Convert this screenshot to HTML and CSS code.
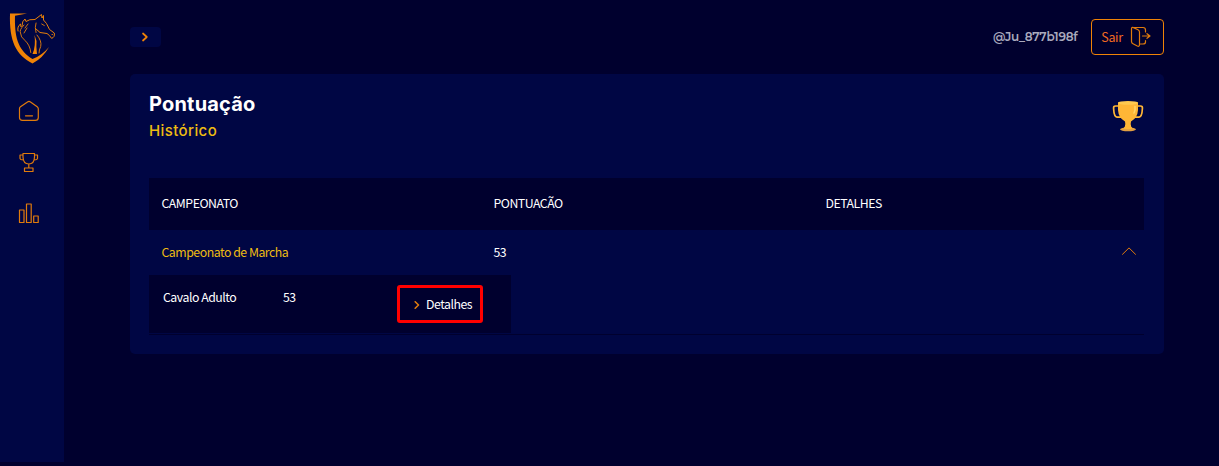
FILE: index.html
```html
<!DOCTYPE html>
<html lang="pt-BR">
<head>
<meta charset="utf-8">
<title>Pontuação</title>
<link rel="stylesheet" href="styles.css">
</head>
<body>
<div class="app">
  <aside class="sidebar">
    <svg class="logo" width="50" height="54" viewBox="0 0 50 54" fill="none" stroke="#e88009" stroke-linecap="round" stroke-linejoin="round">
      <path d="M2 2.500H19L7 4.800C6.500 24 9 39 24.500 48Q34 44.500 41 36Q35 47 24.500 52.500C8 44 1 30 2 2.500Z" fill="#f08306" stroke="none"/>
      <path d="M10 20Q9 15.500 12.500 13Q12 17 14 15Q14 10 17 8L18 10.500Q21 8 27 8.500L33.500 3.500L34 7L35.500 4.500L35.500 9L38.500 12.500L41.500 18.500L46.300 22Q47 26.500 43.500 27.300Q41.500 24 39 22.500L32 21.500L27.500 17.500" stroke-width="1"/>
      <path d="M16 14Q11 19 12.500 22Q12.500 26 17 29.500Q22 34 22.800 41.500M28 12Q26.500 16 28 21.500M29 24Q34 30 32.700 35.500Q31 39 31 42M33.700 13L36.300 14.500M44 23.500H44.500M20 13L17 17M19 17L16 22" stroke-width=".9"/>
      <path d="M26.500 24Q28 35 24.500 43H29Q28 36 28.500 30Z" fill="#f08306" stroke="none"/>
    </svg>
    <nav class="nav">
      <svg width="22" height="22" viewBox="0 0 22 22" class="line"><path d="M1.500 8.500Q1.500 7.400 2.500 6.700L9.500 1.900Q11 .9 12.500 1.900L19.200 6.700Q20.300 7.500 20.300 8.800V17.500Q20.300 20.400 17.400 20.400H4.400Q1.500 20.400 1.500 17.500ZM7.500 15.800H14.500"/></svg>
      <svg width="22" height="22" viewBox="0 0 22 22" class="line"><path d="M5 2.500H16.500V6Q16.300 13 10.800 13Q5.200 13 5 6ZM5 4H2V7.500Q2.300 9 5.500 9M16.500 4H19.500V7.500Q19.200 9 16 9M10.800 13V17M6.500 17H15V20.500H6.500Z"/></svg>
      <svg width="22" height="22" viewBox="0 0 22 22" class="line"><path d="M1.500 8H6V20.500H1.500ZM8.500 2H13.200V20.500H8.500ZM15.700 14H20.200V20.500H15.700Z"/></svg>
    </nav>
  </aside>
  <main class="main">
    <header class="topbar">
      <button class="toggle"><svg width="8" height="10" viewBox="0 0 8 10" class="line bold"><path d="M2 1.500L5.800 5L2 8.500"/></svg></button>
      <div class="account">
        <span class="user">@Ju_877b198f</span>
        <button class="logout"><span class="logout-label">Sair</span>
          <svg width="22" height="22" viewBox="0 0 22 22" class="line"><path d="M3 1.500H13Q15.500 1.500 15.500 4V6M15.500 14.500V16Q15.500 18 13 18H10.500M1.500 3Q1.500 .8 3.500 1.600L8 3.700Q9.500 4.400 9.500 6V18.500Q9.500 21 7.300 20L3 17.800Q1.500 17 1.500 15.500ZM12.500 10H19.500M17 7.700L20 10L17 12.300"/></svg>
        </button>
      </div>
    </header>
    <section class="card">
      <div class="card-head">
        <div>
          <h1 class="title">Pontuação</h1>
          <h2 class="subtitle">Histórico</h2>
        </div>
        <svg class="cup" width="32" height="32" viewBox="0 0 32 32">
          <path d="M7 6H3.500Q1.300 6 1.600 8.500Q2 17 5 17.200H10M25 6H28.500Q30.700 6 30.400 8.500Q30 17 27 17.200H22" fill="none" stroke="#ffb636" stroke-width="1.700"/>
          <path d="M6 2.500H26V10Q25.500 18 19 21.500Q18 24 19.500 28H12.500Q14 24 13 21.500Q6.500 18 6 10Z" fill="#ffb636"/>
          <ellipse cx="16" cy="2.800" rx="10" ry="1.900" fill="#ffc84f"/>
          <ellipse cx="16" cy="29.300" rx="8" ry="2" fill="#e2a042"/>
          <path d="M12.500 27Q16 25.500 19.500 27L20.500 28.500Q16 30 11.500 28.500Z" fill="#ffb636"/>
          <path d="M23 6.500Q23.500 10 22 13" fill="none" stroke="#ffd469" stroke-width="1.600" stroke-linecap="round"/>
        </svg>
      </div>
      <div class="table">
        <div class="row row-head"><span>CAMPEONATO</span><span>PONTUACÃO</span><span>DETALHES</span></div>
        <div class="row row-main"><span class="champ">Campeonato de Marcha</span><span>53</span>
          <span class="collapse"><svg width="14" height="8" viewBox="0 0 14 8" class="line thin"><path d="M.5 7.300L7 .9L13.500 7.300"/></svg></span>
        </div>
        <div class="detail">
          <span class="category">Cavalo Adulto</span><span class="points">53</span>
          <button class="more"><svg width="6" height="8" viewBox="0 0 6 8" class="line more-arrow"><path d="M1.200 .8L4.500 4L1.200 7.200"/></svg><span>Detalhes</span></button>
        </div>
      </div>
    </section>
  </main>
</div>
</body>
</html>
```
FILE: styles.css
```css
* { box-sizing: border-box; }
body {
  margin: 0;
  background: #00002e;
  color: #fff;
  font-family: "Noto Sans CJK SC", "Noto Sans", sans-serif;
  font-size: 12.3px;
  letter-spacing: -.48px;
  line-height: 20px;
}
button { font: inherit; letter-spacing: inherit; color: inherit; padding: 0; border: 0; background: none; }
svg { display: block; flex: none; }
h1, h2 { margin: 0; }
.line { fill: none; stroke: #e07b0c; stroke-width: 1.2; stroke-linejoin: round; stroke-linecap: round; }
.bold { stroke: #f08306; stroke-width: 1.7; }
.thin { stroke-width: 1; }
.app { display: flex; height: 466px; overflow: hidden; }
.sidebar { width: 64px; height: 462px; background: #000644; padding: 11px 0 0 8px; }
.nav { display: flex; flex-direction: column; gap: 29px; padding: 35px 0 0 10px; }
.main { width: 1034px; margin-left: 66px; }
.topbar { height: 74px; padding-top: 19px; display: flex; justify-content: space-between; align-items: flex-start; }
.toggle { width: 31px; height: 20px; margin-top: 8px; border-radius: 4px; background: #000644; display: flex; align-items: center; justify-content: center; padding-right: 1px; }
.account { display: flex; align-items: center; gap: 13px; }
.user { font-family: Montserrat, Inter, sans-serif; font-weight: 600; font-size: 12px; letter-spacing: -.25px; color: #a9a9bd; width: 85px; white-space: nowrap; }
.logout { width: 73px; height: 36px; border: 1px solid #f08306; border-radius: 4px; padding-left: 9px; display: flex; align-items: center; gap: 7px; }
.logout-label { color: #f26a21; width: 22px; font-size: 12.5px; letter-spacing: -.35px; }
.card { height: 280px; padding: 18px 20px 19px 19px; border-radius: 5px; background: #000644; }
.card-head { height: 86px; display: flex; justify-content: space-between; }
.title { font: 700 20px/24px Inter, sans-serif; letter-spacing: .2px; }
.subtitle { font: 500 15px/20px Inter, sans-serif; letter-spacing: .4px; color: #eebc12; margin-top: 5px; }
.cup { margin-top: 8px; }
.table { height: 157px; border-bottom: 1px solid #00002e; }
.row { display: grid; grid-template-columns: 332px 332px 1fr; align-items: center; padding: 0 0 2px 12.5px; }
.row-head { height: 52px; background: #00002e; }
.row-main { height: 45px; }
.champ { color: #eebc12; }
.collapse { display: flex; justify-content: flex-end; padding: 0 8px 2px 0; }
.detail { width: 362px; height: 58px; background: #00002e; display: flex; align-items: flex-start; padding: 10px 0 0 14px; }
.category { width: 120px; padding-top: 2px; }
.points { width: 114px; padding-top: 2px; }
.more { width: 86px; height: 38px; border: 3px solid #f00; border-radius: 3px; display: flex; align-items: center; gap: 6px; padding: 0 0 1px 14px; }
.more-arrow { stroke-width: 1.6; margin-top: 3px; }
```
